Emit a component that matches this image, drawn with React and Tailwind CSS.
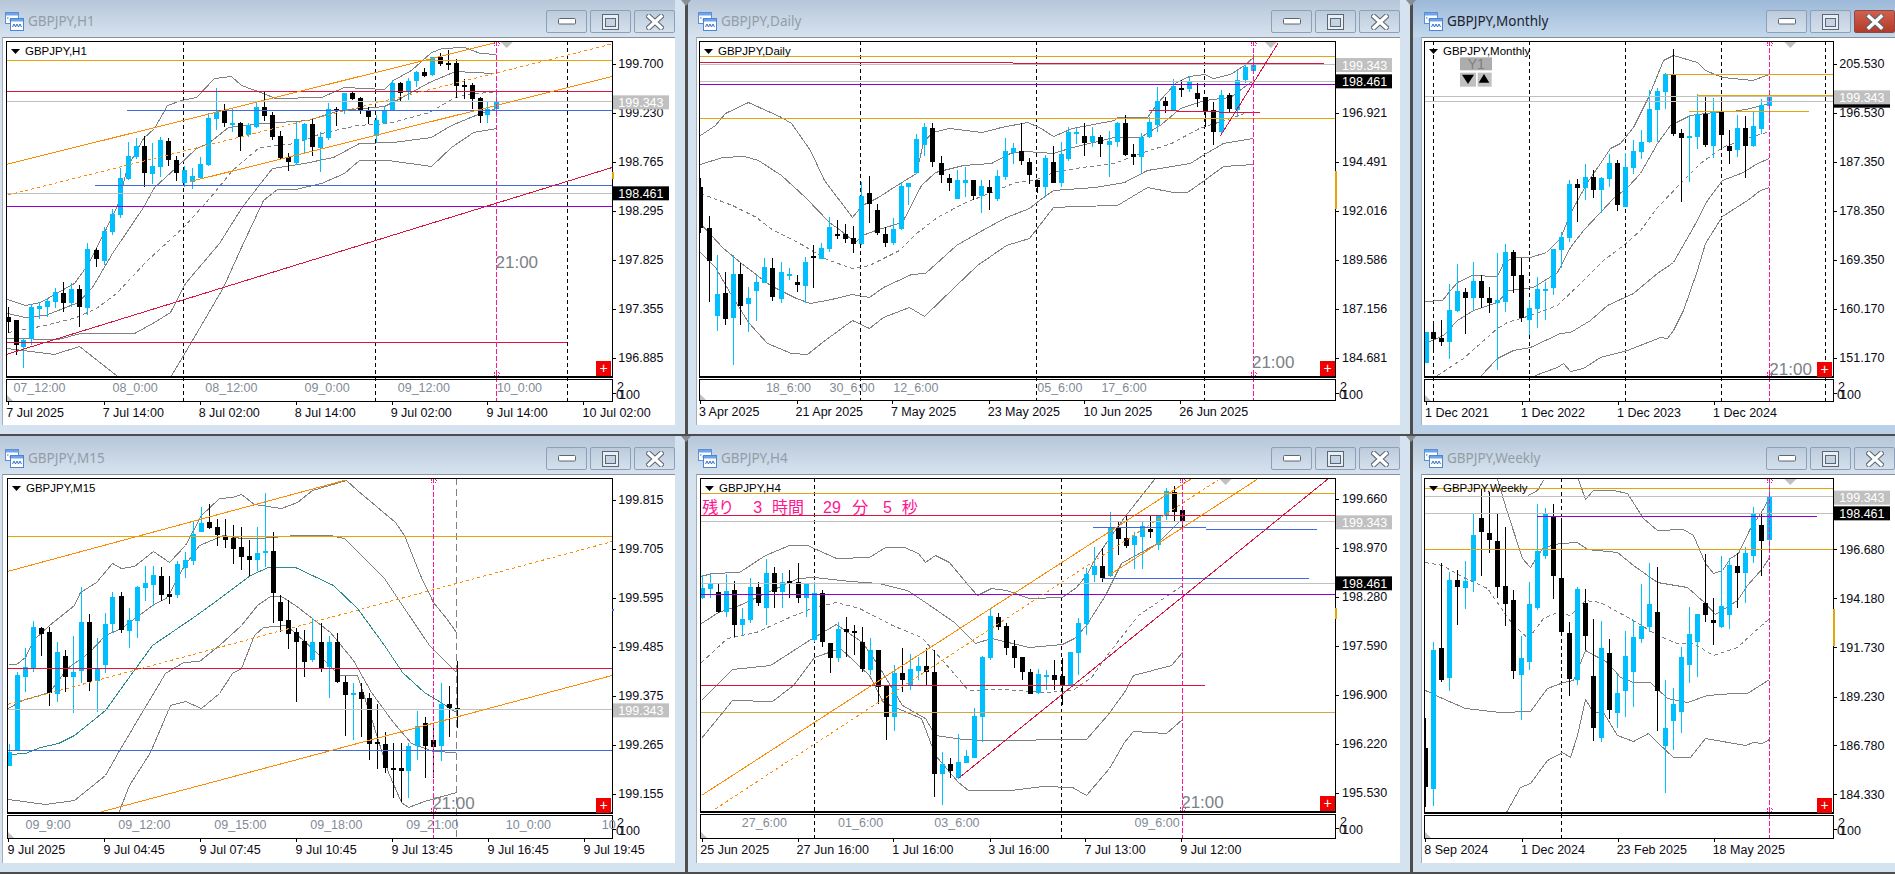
import React from "react";

const BLUE = "#00bfff";
const GOLD = "#e5a50a";
const CRIM = "#dc143c";
const PURP = "#9400d3";
const ROY = "#4169e1";
const LG = "#c0c0c0";
const ORG = "#ff8c00";
const PINK = "#ff1493";

const charts = [
  {
    id: "h1", title: "GBPJPY,H1", sx: 2.24, ox: 0, oy: 0, vb: [3, 38, 672, 387],
    plot: [13, 124, 1370, 1130], sub: [13, 1136, 1370, 1204], priceX: 1385, tri: 1135,
    prices: [["199.700", 191], ["199.230", 338], ["198.765", 485], ["198.295", 632], ["197.825", 779], ["197.355", 926], ["196.885", 1073]],
    boxes: [["199.343", 307, LG], ["198.461", 580, "#000"]],
    subs: [["07_12:00", 30], ["08_0:00", 252], ["08_12:00", 460], ["09_0:00", 682], ["09_12:00", 891], ["10_0:00", 1113]], subY: 1162,
    dates: [["7 Jul 2025", 14, 17], ["7 Jul 14:00", 230, 232], ["8 Jul 02:00", 445, 447], ["8 Jul 14:00", 660, 662], ["9 Jul 02:00", 875, 877], ["9 Jul 14:00", 1090, 1092], ["10 Jul 02:00", 1305, 1307]], dateY: 1238,
    clock: [1110, 785], plus: [1335, 1083], vdash: [411, 841, 1271], pink: 1110, tick: [515, 537, GOLD],
    h: [[15, 1370, 181, GOLD], [15, 1370, 274, CRIM], [15, 1370, 304, LG], [284, 1370, 331, ROY], [213, 1370, 556, ROY], [15, 1370, 580, LG], [15, 1370, 619, PURP], [15, 1270, 1027, CRIM]],
    seg: [[15, 493, 1110, 128, ORG], [18, 585, 1370, 132, ORG, "3 3"], [425, 545, 1370, 230, ORG], [15, 1063, 1370, 503, CRIM]],
    bands: [
      [15, 897, 55, 915, 90, 905, 125, 880, 165, 850, 195, 795, 235, 690, 265, 610, 285, 500, 320, 415, 345, 385, 375, 315, 405, 300, 440, 290, 480, 235, 518, 228, 540, 255, 590, 278, 615, 295, 720, 292, 770, 262, 860, 268, 880, 240, 920, 210, 965, 155, 990, 145, 1040, 142, 1075, 160, 1110, 163],
      [15, 940, 55, 950, 100, 945, 175, 905, 205, 860, 250, 760, 320, 620, 345, 560, 395, 500, 440, 445, 465, 430, 510, 380, 590, 370, 690, 360, 760, 330, 860, 318, 900, 290, 960, 245, 1020, 212, 1060, 215, 1105, 220],
      [15, 1015, 130, 1018, 180, 1000, 300, 1000, 345, 965, 380, 935, 415, 850, 490, 730, 540, 625, 575, 560, 610, 505, 680, 490, 745, 470, 805, 428, 880, 427, 965, 412, 1010, 375, 1075, 340, 1110, 323],
      [15, 1045, 120, 1062, 178, 1037, 260, 1125, 270, 1135], [380, 1130, 430, 1020, 500, 860, 540, 740, 590, 600, 620, 567, 660, 567, 720, 548, 770, 520, 805, 480, 870, 480, 965, 498, 1010, 440, 1060, 395, 1110, 385],
    ],
    mid: [18, 995, 100, 975, 170, 950, 215, 925, 260, 880, 330, 780, 410, 680, 470, 590, 520, 510, 580, 440, 660, 430, 720, 400, 800, 375, 870, 370, 960, 335, 1020, 292, 1060, 280, 1105, 277],
    candles: [[17, 950, 965, 920, 1000, 0], [35, 960, 1035, 960, 1065, 0], [52, 1020, 1040, 1015, 1105, 1], [70, 922, 1018, 912, 1035, 1], [88, 918, 928, 905, 958, 1], [106, 903, 922, 895, 950, 1], [124, 877, 906, 865, 925, 1], [142, 880, 908, 847, 935, 0], [160, 868, 910, 850, 922, 1], [178, 868, 920, 855, 980, 0], [196, 748, 923, 730, 945, 1], [214, 750, 778, 745, 800, 0], [232, 693, 782, 680, 795, 1], [250, 642, 695, 628, 705, 1], [268, 535, 645, 505, 655, 1], [286, 468, 538, 425, 540, 1], [304, 438, 472, 415, 478, 1], [322, 438, 518, 408, 562, 0], [340, 498, 522, 430, 552, 1], [358, 420, 500, 410, 530, 1], [376, 422, 480, 415, 498, 0], [394, 480, 518, 468, 542, 0], [412, 510, 548, 498, 562, 1], [430, 528, 545, 503, 567, 1], [447, 492, 533, 470, 535, 1], [465, 355, 494, 340, 498, 1], [483, 335, 356, 265, 390, 1], [501, 332, 370, 312, 382, 0], [519, 370, 374, 325, 395, 1], [537, 370, 410, 365, 452, 0], [555, 375, 405, 368, 412, 1], [573, 322, 380, 308, 385, 1], [591, 322, 348, 275, 362, 0], [609, 345, 410, 335, 420, 0], [627, 408, 474, 392, 478, 0], [645, 472, 486, 458, 512, 0], [663, 418, 490, 365, 495, 1], [681, 372, 420, 368, 458, 1], [698, 372, 440, 358, 468, 0], [716, 412, 445, 395, 515, 1], [734, 328, 415, 310, 420, 1], [752, 326, 332, 322, 378, 0], [770, 280, 332, 278, 342, 1], [788, 280, 298, 275, 300, 0], [806, 295, 330, 290, 342, 0], [824, 332, 350, 320, 372, 0], [842, 360, 408, 345, 428, 1], [860, 332, 370, 322, 372, 1], [878, 250, 332, 240, 332, 1], [896, 250, 280, 245, 305, 0], [914, 243, 275, 235, 300, 1], [931, 216, 243, 212, 262, 1], [949, 216, 228, 205, 232, 0], [967, 172, 225, 170, 228, 1], [985, 170, 192, 158, 198, 0], [1003, 188, 194, 150, 210, 0], [1021, 190, 258, 178, 295, 0], [1039, 254, 258, 238, 296, 0], [1057, 255, 298, 250, 328, 0], [1075, 294, 347, 290, 370, 0], [1092, 328, 345, 305, 368, 1], [1110, 305, 327, 268, 350, 1]],
  },
  {
    id: "d1", title: "GBPJPY,Daily", sx: 2.119, ox: 680, oy: 0, vb: [697, 38, 703, 387],
    plot: [40, 124, 1389, 1130], sub: [40, 1136, 1389, 1201], priceX: 1403, tri: 1252,
    prices: [["196.921", 338], ["194.491", 485], ["192.016", 632], ["189.586", 779], ["187.156", 926], ["184.681", 1073]],
    boxes: [["199.343", 195, LG], ["198.461", 244, "#000"]],
    subs: [["18_6:00", 182], ["30_6:00", 317], ["12_6:00", 452], ["05_6:00", 757], ["17_6:00", 893]], subY: 1162,
    dates: [["3 Apr 2025", 40, 43], ["21 Apr 2025", 245, 247], ["7 May 2025", 447, 450], ["23 May 2025", 652, 654], ["10 Jun 2025", 855, 857], ["26 Jun 2025", 1058, 1060]], dateY: 1235,
    clock: [1212, 1085], plus: [1356, 1083], vdash: [382, 755, 1111], pink: 1214, tick: [513, 628, GOLD],
    h: [[42, 1389, 169, GOLD], [42, 705, 187, CRIM], [705, 1365, 190, CRIM], [42, 1389, 192, LG], [42, 1389, 244, LG], [42, 1389, 253, PURP], [42, 1389, 355, GOLD], [993, 1053, 331, CRIM]],
    seg: [[1053, 334, 1228, 338, CRIM], [1145, 408, 1268, 128, CRIM]],
    bands: [
      [42, 405, 75, 375, 95, 340, 145, 307, 215, 352, 235, 370, 275, 450, 305, 540, 365, 650, 385, 615, 420, 590, 455, 558, 500, 520, 515, 425, 535, 395, 570, 385, 640, 395, 680, 380, 735, 367, 760, 380, 790, 407, 830, 383, 920, 360, 925, 350, 990, 350, 1010, 310, 1050, 245, 1078, 228, 1110, 222, 1130, 235, 1165, 222, 1195, 195, 1214, 170],
      [42, 492, 90, 472, 135, 468, 165, 480, 215, 525, 265, 590, 315, 665, 340, 690, 370, 725, 385, 705, 420, 688, 470, 665, 510, 555, 540, 515, 600, 495, 660, 490, 700, 460, 730, 452, 790, 458, 830, 440, 920, 412, 975, 410, 1020, 372, 1060, 325, 1110, 300, 1165, 290, 1190, 265, 1214, 240],
      [42, 670, 90, 740, 130, 790, 190, 855, 245, 895, 275, 908, 320, 898, 365, 883, 400, 890, 430, 860, 490, 822, 520, 818, 585, 735, 640, 690, 690, 650, 740, 625, 760, 600, 790, 570, 880, 560, 940, 545, 990, 510, 1080, 490, 1110, 462, 1150, 430, 1214, 413],
      [42, 755, 75, 800, 105, 880, 145, 965, 185, 1030, 235, 1060, 270, 1062, 300, 1025, 365, 960, 400, 985, 430, 950, 485, 922, 518, 948, 580, 860, 630, 795, 690, 735, 740, 715, 790, 622, 840, 618, 925, 615, 990, 562, 1045, 577, 1075, 575, 1110, 540, 1150, 497, 1214, 493],
    ],
    mid: [42, 578, 110, 615, 160, 650, 190, 685, 260, 735, 310, 778, 365, 805, 400, 795, 465, 750, 500, 700, 545, 650, 600, 610, 660, 575, 710, 545, 750, 540, 790, 515, 850, 500, 920, 490, 975, 460, 1040, 430, 1100, 385, 1165, 355, 1195, 340],
    candles: [[43, 562, 685, 535, 700, 0], [61, 683, 782, 648, 905, 0], [78, 882, 948, 765, 992, 1], [95, 880, 956, 815, 975, 0], [112, 823, 953, 765, 1095, 1], [128, 822, 918, 790, 975, 0], [145, 895, 912, 860, 995, 1], [162, 847, 873, 825, 962, 1], [179, 802, 848, 775, 850, 1], [196, 805, 890, 775, 902, 0], [213, 817, 897, 785, 908, 1], [230, 823, 827, 805, 840, 1], [247, 845, 854, 825, 875, 0], [264, 787, 857, 770, 908, 1], [281, 768, 773, 735, 865, 0], [298, 745, 777, 730, 778, 1], [315, 682, 748, 652, 755, 1], [332, 702, 705, 660, 718, 0], [349, 702, 716, 672, 730, 0], [366, 714, 732, 678, 758, 0], [383, 588, 732, 545, 735, 1], [400, 580, 612, 528, 668, 0], [417, 630, 700, 612, 705, 0], [434, 702, 728, 680, 740, 0], [451, 688, 730, 655, 735, 1], [468, 558, 688, 545, 690, 1], [484, 550, 560, 548, 615, 1], [501, 418, 518, 402, 522, 1], [518, 382, 435, 368, 468, 1], [535, 385, 486, 370, 502, 0], [552, 490, 525, 468, 548, 0], [569, 535, 548, 522, 572, 0], [586, 540, 596, 510, 598, 1], [603, 541, 548, 502, 590, 1], [620, 541, 588, 540, 600, 0], [637, 558, 588, 540, 640, 1], [654, 560, 578, 540, 630, 0], [671, 528, 598, 510, 602, 1], [688, 453, 532, 415, 540, 1], [705, 445, 460, 430, 492, 1], [722, 453, 482, 370, 495, 0], [739, 487, 525, 475, 552, 0], [756, 540, 560, 540, 580, 0], [773, 473, 562, 465, 590, 1], [790, 487, 548, 438, 550, 0], [807, 462, 548, 425, 560, 1], [823, 396, 477, 382, 482, 1], [840, 396, 402, 385, 432, 1], [857, 408, 428, 368, 468, 0], [874, 408, 426, 380, 440, 1], [891, 410, 432, 405, 472, 0], [908, 422, 434, 392, 530, 1], [925, 370, 425, 365, 440, 1], [942, 370, 465, 345, 468, 0], [959, 462, 470, 432, 495, 0], [976, 410, 472, 398, 518, 1], [993, 366, 410, 350, 413, 1], [1010, 304, 374, 260, 395, 1], [1027, 304, 318, 292, 338, 0], [1044, 258, 330, 238, 332, 1], [1061, 265, 269, 240, 292, 0], [1078, 245, 268, 228, 275, 1], [1095, 280, 297, 248, 322, 0], [1112, 292, 332, 290, 382, 0], [1129, 330, 396, 305, 435, 0], [1146, 286, 396, 270, 405, 1], [1163, 285, 328, 280, 340, 0], [1180, 240, 330, 212, 350, 1], [1197, 202, 240, 195, 248, 1], [1214, 195, 212, 162, 215, 1]],
  },
  {
    id: "mn", title: "GBPJPY,Monthly", active: true, sx: 3, ox: 1400, oy: 0, vb: [1422, 38, 473, 387],
    plot: [73, 124, 1298, 1130], sub: [73, 1136, 1298, 1204], priceX: 1318, tri: 1171,
    prices: [["205.530", 191], ["196.530", 338], ["187.350", 485], ["178.350", 632], ["169.350", 779], ["160.170", 926], ["151.170", 1073]],
    boxes: [["198.461", 317, "#000", 1], ["199.343", 292, LG]],
    subs: [], subY: 1162,
    dates: [["1 Dec 2021", 75, 77], ["1 Dec 2022", 363, 365], ["1 Dec 2023", 651, 653], ["1 Dec 2024", 939, 941]], dateY: 1238,
    clock: [1108, 1105], plus: [1252, 1085], vdash: [100, 388, 676, 964, 1276], pink: 1108, y1: true,
    h: [[74, 1298, 289, LG], [74, 1298, 304, LG], [797, 1298, 223, GOLD], [892, 1298, 284, GOLD], [867, 1227, 334, GOLD]],
    seg: [],
    bands: [
      [75, 903, 125, 900, 150, 870, 172, 845, 215, 825, 290, 828, 310, 790, 340, 772, 390, 770, 438, 755, 480, 715, 510, 640, 560, 545, 600, 490, 630, 445, 660, 430, 700, 380, 745, 290, 790, 180, 820, 165, 890, 185, 915, 210, 965, 232, 1055, 241, 1108, 222],
      [74, 1030, 130, 1005, 170, 960, 220, 930, 290, 905, 325, 870, 400, 860, 470, 815, 510, 740, 550, 690, 600, 635, 640, 595, 680, 560, 720, 520, 770, 430, 810, 375, 870, 345, 940, 335, 1000, 333, 1050, 325, 1108, 310],
      [240, 1128, 290, 1075, 340, 1050, 390, 1042, 480, 1000, 510, 995, 570, 960, 620, 915, 700, 880, 770, 820, 820, 785, 880, 680, 920, 600, 965, 540, 1030, 515, 1070, 490, 1108, 475],
      [405, 1125, 470, 1100, 490, 1088, 510, 1113, 550, 1105, 600, 1072, 680, 1050, 780, 1010, 800, 1014, 820, 990, 850, 930, 890, 810, 915, 730, 965, 648, 1040, 600, 1080, 570, 1108, 560],
    ],
    mid: [110, 1125, 190, 1075, 290, 985, 320, 965, 390, 945, 470, 915, 540, 850, 610, 780, 670, 735, 720, 690, 770, 620, 840, 550, 900, 490, 965, 440, 1030, 418, 1108, 393],
    candles: [[79, 995, 1088, 995, 1088, 1], [100, 997, 1017, 962, 1050, 0], [124, 1013, 1025, 960, 1038, 0], [148, 930, 1025, 852, 1077, 1], [172, 873, 933, 792, 937, 1], [196, 876, 893, 865, 1002, 0], [220, 843, 893, 786, 930, 1], [244, 843, 893, 825, 925, 0], [268, 894, 908, 860, 938, 0], [292, 900, 910, 758, 1110, 1], [316, 756, 905, 732, 937, 1], [340, 756, 828, 750, 880, 0], [364, 825, 955, 775, 965, 0], [388, 925, 960, 900, 1005, 1], [412, 867, 927, 830, 985, 1], [436, 867, 870, 845, 960, 1], [460, 747, 864, 747, 885, 1], [484, 711, 750, 697, 805, 1], [508, 552, 714, 540, 725, 1], [532, 552, 564, 537, 665, 0], [556, 531, 564, 492, 600, 1], [580, 531, 570, 510, 593, 0], [604, 534, 570, 530, 638, 1], [628, 489, 537, 462, 560, 1], [652, 489, 614, 480, 632, 0], [676, 501, 621, 460, 622, 1], [700, 453, 504, 420, 522, 1], [724, 426, 456, 390, 478, 1], [748, 327, 426, 270, 430, 1], [772, 273, 330, 265, 425, 1], [796, 222, 276, 220, 327, 1], [820, 225, 402, 147, 408, 0], [844, 400, 414, 388, 605, 0], [868, 408, 413, 345, 545, 1], [892, 343, 411, 282, 447, 1], [916, 343, 435, 287, 440, 0], [940, 336, 438, 295, 473, 1], [964, 336, 405, 305, 440, 0], [988, 437, 453, 390, 492, 0], [1012, 384, 450, 345, 472, 1], [1036, 384, 438, 348, 533, 0], [1060, 378, 438, 335, 440, 1], [1084, 316, 387, 297, 402, 1], [1108, 291, 318, 288, 360, 1]],
  },
  {
    id: "m15", title: "GBPJPY,M15", sx: 2.24, ox: 0, oy: 435, vb: [3, 475, 672, 388],
    plot: [16, 130, 1370, 1135], sub: [16, 1141, 1370, 1210], priceX: 1385,
    prices: [["199.815", 194], ["199.705", 341], ["199.595", 488], ["199.485", 635], ["199.375", 782], ["199.265", 929], ["199.155", 1076]],
    boxes: [["199.343", 826, LG]],
    subs: [["09_9:00", 57], ["09_12:00", 265], ["09_15:00", 480], ["09_18:00", 695], ["09_21:00", 910], ["10_0:00", 1133], ["10", 1348]], subY: 1168,
    dates: [["9 Jul 2025", 17, 19], ["9 Jul 04:45", 232, 234], ["9 Jul 07:45", 447, 449], ["9 Jul 10:45", 662, 664], ["9 Jul 13:45", 877, 879], ["9 Jul 16:45", 1092, 1094], ["9 Jul 19:45", 1307, 1309]], dateY: 1244,
    clock: [968, 1102], plus: [1335, 1090], vdash: [], pink: 969, gray: 1022, tick: [523, 527, ROY],
    h: [[18, 1370, 304, GOLD], [18, 1370, 700, CRIM], [18, 1370, 823, LG], [18, 1370, 946, ROY]],
    seg: [[18, 409, 775, 135, ORG], [18, 808, 1370, 320, ORG, "3 3"], [220, 1133, 1370, 722, ORG]],
    bands: [
      [18, 688, 36, 686, 55, 665, 73, 615, 110, 570, 165, 510, 180, 470, 215, 440, 250, 383, 270, 400, 300, 392, 342, 348, 378, 380, 415, 330, 450, 240, 490, 190, 520, 185, 540, 178, 570, 208, 630, 220, 665, 200, 700, 165, 775, 135, 800, 165, 885, 260, 905, 300, 940, 420, 970, 500, 1000, 550, 1022, 592],
      [18, 820, 50, 795, 110, 770, 150, 700, 200, 650, 235, 600, 270, 580, 340, 510, 375, 485, 410, 395, 445, 330, 500, 300, 540, 310, 580, 310, 610, 305, 660, 300, 740, 300, 770, 308, 815, 370, 860, 430, 900, 510, 960, 630, 1000, 680, 1022, 712],
      [18, 1093, 100, 1108, 165, 1095, 235, 1020, 265, 950, 300, 870, 370, 715, 410, 680, 445, 678, 490, 630, 540, 570, 575, 510, 605, 482, 630, 482, 660, 510, 740, 590, 790, 675, 830, 770, 880, 860, 920, 925, 970, 948, 1022, 952],
      [265, 1133, 290, 1050, 335, 950, 380, 810, 415, 798, 450, 820, 490, 775, 520, 715, 540, 700, 570, 600, 590, 575, 640, 570, 700, 640, 760, 720, 800, 720, 830, 850, 870, 1010, 898, 1100, 915, 1117, 950, 1097, 1022, 1072],
    ],
    teal: [18, 958, 55, 955, 90, 935, 130, 925, 165, 900, 235, 825, 280, 740, 340, 630, 440, 540, 480, 500, 560, 420, 600, 395, 660, 397, 745, 450, 800, 520, 860, 630, 900, 710, 950, 770, 990, 805, 1022, 832],
    candles: [[21, 950, 992, 928, 992, 1], [37, 720, 945, 712, 945, 1], [55, 696, 726, 640, 772, 1], [73, 576, 698, 558, 712, 1], [91, 580, 596, 575, 662, 0], [109, 591, 774, 575, 812, 0], [127, 652, 776, 622, 800, 1], [145, 663, 727, 645, 770, 0], [163, 710, 725, 603, 835, 1], [181, 562, 708, 455, 745, 1], [199, 562, 742, 538, 767, 0], [217, 703, 738, 610, 832, 1], [235, 568, 690, 535, 715, 1], [252, 486, 568, 470, 595, 1], [270, 484, 586, 472, 594, 0], [288, 556, 588, 518, 640, 1], [306, 456, 558, 452, 608, 1], [324, 444, 458, 393, 497, 1], [342, 420, 450, 392, 512, 1], [360, 424, 480, 396, 497, 0], [378, 478, 486, 423, 506, 0], [396, 388, 480, 378, 490, 1], [414, 376, 398, 350, 430, 1], [432, 296, 378, 262, 390, 1], [450, 264, 290, 215, 292, 1], [468, 262, 278, 208, 282, 0], [485, 276, 300, 252, 333, 0], [503, 302, 314, 252, 340, 0], [521, 310, 342, 270, 387, 0], [539, 337, 366, 275, 405, 0], [557, 364, 374, 316, 422, 0], [575, 354, 374, 276, 408, 1], [593, 348, 353, 175, 395, 1], [611, 348, 474, 292, 563, 0], [628, 502, 558, 480, 590, 0], [646, 555, 596, 495, 642, 0], [664, 592, 620, 580, 800, 0], [682, 618, 680, 585, 726, 0], [700, 622, 675, 548, 680, 1], [718, 621, 698, 565, 710, 0], [736, 621, 695, 602, 790, 1], [754, 621, 740, 595, 745, 0], [772, 742, 780, 722, 902, 0], [790, 774, 778, 745, 915, 1], [808, 772, 792, 745, 905, 0], [826, 790, 928, 775, 975, 0], [844, 922, 927, 808, 1003, 0], [862, 928, 998, 890, 1015, 0], [880, 1000, 1004, 925, 1090, 0], [898, 1000, 1007, 925, 1100, 0], [915, 934, 1008, 925, 1090, 1], [933, 872, 934, 828, 975, 1], [951, 865, 933, 847, 1030, 0], [969, 915, 936, 870, 1030, 0], [987, 808, 933, 745, 977, 1], [1005, 806, 820, 752, 905, 0], [1023, 820, 823, 678, 880, 0]],
  },
  {
    id: "h4", title: "GBPJPY,H4", sx: 2.119, ox: 680, oy: 435, vb: [697, 475, 703, 388],
    plot: [42, 130, 1389, 1130], sub: [42, 1136, 1389, 1210], priceX: 1403, tri: 1156, timer: true,
    prices: [["199.660", 191], ["198.970", 338], ["198.280", 485], ["197.590", 632], ["196.900", 779], ["196.220", 926], ["195.530", 1073]],
    boxes: [["199.343", 262, LG], ["198.461", 445, "#000"]],
    subs: [["27_6:00", 131], ["01_6:00", 335], ["03_6:00", 539], ["09_6:00", 963]], subY: 1162,
    dates: [["25 Jun 2025", 43, 46], ["27 Jun 16:00", 247, 249], ["1 Jul 16:00", 450, 452], ["3 Jul 16:00", 653, 656], ["7 Jul 13:00", 857, 859], ["9 Jul 12:00", 1060, 1062]], dateY: 1244,
    clock: [1062, 1099], plus: [1356, 1083], vdash: [283, 808], pink: 1063, tick: [520, 552, GOLD],
    h: [[44, 1389, 175, GOLD], [44, 1389, 239, CRIM], [44, 1389, 259, LG], [875, 1115, 277, ROY], [1115, 1350, 281, ROY], [895, 1333, 430, ROY], [44, 1389, 445, LG], [44, 1389, 476, PURP], [44, 1112, 751, CRIM], [44, 1389, 832, "#d4a64a"]],
    seg: [[47, 1080, 1085, 130, ORG], [75, 1122, 1140, 135, ORG, "3 3"], [910, 420, 1223, 133, ORG], [590, 1030, 1372, 133, CRIM]],
    bands: [
      [44, 422, 65, 415, 125, 410, 180, 360, 230, 330, 270, 330, 330, 370, 400, 365, 435, 335, 475, 335, 505, 355, 520, 380, 540, 360, 570, 380, 610, 450, 630, 480, 660, 460, 690, 465, 740, 490, 810, 485, 840, 455, 860, 420, 880, 370, 940, 245, 1005, 132],
      [44, 565, 80, 530, 125, 510, 185, 470, 250, 430, 285, 425, 360, 437, 420, 445, 480, 465, 520, 500, 580, 560, 625, 625, 660, 610, 740, 635, 810, 628, 835, 610, 860, 570, 900, 480, 935, 385, 1010, 325, 1063, 250],
      [44, 795, 110, 702, 190, 690, 280, 610, 330, 566, 385, 620, 420, 690, 470, 810, 520, 850, 540, 900, 600, 912, 650, 915, 860, 912, 905, 840, 940, 770, 960, 720, 1040, 690, 1063, 650],
      [44, 910, 110, 795, 195, 798, 240, 750, 285, 665, 340, 640, 400, 720, 430, 800, 510, 850, 540, 960, 590, 1040, 610, 1065, 700, 1065, 770, 1052, 830, 1055, 860, 1080, 910, 1000, 940, 920, 960, 888, 1030, 895, 1063, 852],
    ],
    mid: [44, 680, 100, 610, 160, 590, 230, 545, 285, 515, 330, 502, 380, 520, 450, 570, 510, 605, 560, 680, 610, 765, 680, 762, 780, 770, 830, 765, 870, 725, 910, 650, 970, 540, 1063, 450],
    candles: [[46, 460, 490, 420, 492, 1], [63, 446, 462, 418, 490, 1], [80, 470, 530, 445, 535, 0], [97, 468, 530, 418, 545, 1], [114, 465, 570, 438, 607, 0], [131, 552, 570, 520, 600, 1], [148, 456, 555, 430, 565, 1], [165, 456, 504, 440, 512, 0], [182, 414, 519, 372, 570, 1], [199, 414, 472, 395, 518, 0], [216, 442, 472, 415, 520, 1], [232, 438, 444, 405, 490, 0], [249, 440, 490, 385, 505, 0], [266, 447, 488, 446, 545, 1], [283, 475, 615, 440, 620, 1], [300, 475, 622, 465, 635, 0], [317, 625, 668, 625, 713, 0], [334, 582, 668, 560, 680, 1], [351, 582, 590, 545, 665, 0], [368, 588, 594, 570, 660, 0], [385, 622, 702, 575, 710, 0], [402, 645, 705, 610, 720, 1], [419, 646, 755, 646, 807, 0], [436, 752, 845, 750, 915, 0], [453, 714, 846, 690, 888, 1], [470, 714, 735, 640, 770, 0], [487, 702, 750, 658, 765, 1], [504, 693, 707, 665, 735, 1], [521, 693, 710, 640, 750, 0], [538, 712, 1018, 645, 1085, 0], [555, 988, 1018, 950, 1110, 1], [572, 988, 1007, 968, 1028, 0], [589, 982, 1030, 897, 1032, 1], [606, 963, 984, 945, 985, 1], [622, 843, 968, 820, 970, 1], [639, 665, 846, 662, 922, 1], [656, 543, 668, 522, 675, 1], [673, 546, 575, 533, 585, 0], [690, 573, 638, 565, 660, 0], [707, 633, 668, 615, 700, 0], [724, 667, 710, 665, 735, 0], [741, 712, 777, 702, 778, 0], [758, 717, 775, 703, 778, 1], [775, 720, 725, 705, 765, 1], [792, 720, 735, 675, 765, 0], [809, 723, 752, 670, 810, 0], [826, 652, 752, 650, 752, 1], [843, 565, 654, 550, 720, 1], [860, 418, 568, 400, 600, 1], [877, 393, 420, 335, 442, 1], [894, 393, 428, 338, 440, 0], [911, 277, 422, 232, 425, 1], [928, 278, 312, 262, 360, 0], [945, 310, 332, 240, 340, 0], [962, 304, 330, 290, 402, 1], [979, 273, 305, 260, 402, 1], [996, 282, 290, 240, 310, 0], [1013, 240, 330, 240, 345, 1], [1030, 168, 240, 160, 255, 1], [1046, 172, 230, 153, 258, 0], [1063, 226, 258, 218, 280, 0]],
  },
  {
    id: "w1", title: "GBPJPY,Weekly", sx: 3, ox: 1400, oy: 435, vb: [1422, 475, 473, 388],
    plot: [73, 130, 1298, 1135], sub: [73, 1141, 1298, 1210], priceX: 1318, tri: 1171,
    prices: [["196.680", 343], ["194.180", 490], ["191.730", 637], ["189.230", 785], ["186.780", 931], ["184.330", 1078]],
    boxes: [["199.343", 188, LG], ["198.461", 235, "#000"]],
    subs: [], subY: 1168,
    dates: [["8 Sep 2024", 73, 76], ["1 Dec 2024", 363, 365], ["23 Feb 2025", 650, 653], ["18 May 2025", 938, 941]], dateY: 1244,
    plus: [1252, 1090], vdash: [484], pink: 1108, tick: [522, 632, GOLD],
    h: [[74, 1298, 160, GOLD], [74, 1298, 184, LG], [74, 1298, 235, LG], [412, 1250, 244, PURP], [74, 1305, 343, GOLD]],
    seg: [],
    bands: [
      [290, 132, 320, 230, 365, 370, 390, 397, 430, 335, 480, 325, 530, 322, 560, 342, 650, 350, 700, 390, 770, 440, 860, 455, 915, 505, 945, 537, 1010, 495, 1040, 450, 1085, 400, 1108, 365],
      [385, 180, 410, 165, 430, 135],
      [535, 132, 556, 192, 580, 165, 640, 165, 680, 175, 730, 250, 770, 285, 850, 283, 880, 300, 915, 385, 940, 415, 965, 405, 990, 370, 1015, 355, 1050, 280, 1085, 225, 1108, 185],
      [75, 765, 125, 790, 195, 818, 300, 832, 390, 828, 440, 760, 490, 742, 520, 735, 556, 645, 620, 680, 660, 725, 700, 740, 750, 740, 800, 790, 860, 800, 920, 780, 1000, 775, 1040, 775, 1108, 733],
      [318, 1132, 360, 1055, 390, 1045, 440, 975, 485, 950, 510, 965, 530, 900, 555, 793, 580, 830, 610, 830, 650, 900, 700, 917, 745, 895, 775, 925, 820, 967, 870, 965, 915, 908, 1035, 930, 1060, 920, 1085, 925, 1108, 912],
    ],
    mid: [75, 380, 125, 390, 190, 425, 260, 460, 340, 570, 385, 610, 430, 550, 470, 532, 510, 540, 555, 495, 600, 500, 700, 555, 770, 600, 830, 625, 880, 625, 940, 660, 1010, 635, 1050, 600, 1108, 548],
    candles: [[76, 940, 1055, 848, 1115, 0], [100, 646, 1062, 622, 1112, 1], [124, 640, 735, 385, 740, 0], [148, 435, 728, 412, 768, 1], [172, 435, 456, 405, 570, 0], [196, 438, 460, 378, 522, 1], [220, 300, 438, 237, 470, 1], [244, 249, 290, 160, 422, 0], [268, 294, 315, 170, 353, 0], [292, 318, 456, 233, 488, 0], [316, 453, 507, 276, 572, 0], [340, 495, 708, 465, 732, 0], [364, 670, 720, 602, 855, 1], [388, 507, 681, 440, 705, 1], [412, 348, 520, 207, 525, 1], [436, 237, 362, 218, 372, 1], [460, 245, 422, 207, 492, 0], [484, 430, 590, 250, 590, 0], [508, 594, 732, 560, 782, 0], [532, 462, 736, 456, 750, 1], [556, 504, 603, 462, 645, 0], [580, 723, 878, 552, 918, 0], [604, 639, 908, 558, 920, 1], [628, 654, 825, 612, 852, 0], [652, 774, 834, 718, 880, 1], [676, 663, 768, 588, 845, 1], [700, 606, 712, 555, 815, 1], [724, 573, 612, 447, 625, 1], [748, 507, 576, 385, 590, 1], [772, 531, 768, 395, 888, 0], [796, 879, 933, 735, 1075, 1], [820, 807, 858, 758, 945, 1], [844, 666, 831, 636, 895, 1], [868, 597, 690, 516, 745, 1], [892, 537, 621, 537, 725, 1], [916, 504, 540, 357, 560, 0], [940, 555, 564, 490, 630, 0], [964, 513, 576, 363, 578, 1], [988, 390, 540, 370, 582, 1], [1012, 393, 414, 355, 518, 0], [1036, 354, 414, 335, 505, 1], [1060, 237, 362, 215, 385, 1], [1084, 270, 318, 237, 422, 0], [1108, 186, 315, 135, 340, 1]],
  },
];

function Chart({ c }) {
  const X = (z) => c.ox + z / c.sx;
  const Y = (z) => c.oy + z / 3;
  const RX = (z) => Math.round(X(z));
  const RY = (z) => Math.round(Y(z));
  const pts = (a) => {
    let s = "";
    for (let i = 0; i < a.length; i += 2) s += `${RX(a[i]) + 0.5},${RY(a[i + 1]) + 0.5} `;
    return s;
  };
  const L = RX(c.plot[0]), T = RY(c.plot[1]), R = RX(c.plot[2]), B = RY(c.plot[3]);
  const ST = RY(c.sub[1]), SB = RY(c.sub[3]);
  const [vx, vy, vw, vh] = c.vb;
  return (
    <svg
      width={vw}
      height={vh}
      viewBox={`${vx} ${vy} ${vw} ${vh}`}
      className="block font-['Liberation_Sans',Arial,sans-serif] text-[12.5px]"
    >
      <defs>
        <clipPath id={`clip-${c.id}`}>
          <rect x={L} y={T} width={R - L} height={B - T} />
        </clipPath>
      </defs>

      <g shapeRendering="crispEdges">
        {c.vdash.map((x) => (
          <line key={x} x1={RX(x) + 0.5} x2={RX(x) + 0.5} y1={T} y2={SB} stroke="#000" strokeDasharray="4 3" />
        ))}
        {c.gray && (
          <line x1={RX(c.gray) + 0.5} x2={RX(c.gray) + 0.5} y1={T} y2={SB} stroke="#808080" strokeDasharray="7 4" />
        )}
      </g>

      <g clipPath={`url(#clip-${c.id})`} shapeRendering="crispEdges">
        {c.bands.map((b, i) => (
          <polyline key={i} points={pts(b)} fill="none" stroke="#808080" />
        ))}
        {c.mid && <polyline points={pts(c.mid)} fill="none" stroke="#808080" strokeDasharray="4 3" />}
        {c.teal && <polyline points={pts(c.teal)} fill="none" stroke="#2e8b8b" />}
        {c.candles.map(([x, t, b, hi, lo, up], i) => {
          const cx = RX(x);
          const col = up ? BLUE : "#000";
          const y1 = RY(Math.min(t, b));
          const y2 = Math.max(RY(Math.max(t, b)), y1 + 2);
          return (
            <g key={i} fill={col}>
              <rect x={cx} y={RY(hi)} width={1} height={Math.max(RY(lo) - RY(hi), 1)} />
              <rect x={cx - 2} y={y1} width={5} height={y2 - y1} />
            </g>
          );
        })}
        {c.h.map(([x1, x2, y, col], i) => (
          <rect key={i} x={RX(x1)} y={RY(y)} width={RX(x2) - RX(x1)} height={1} fill={col} />
        ))}
        {c.seg.map(([x1, y1, x2, y2, col, dash], i) => (
          <line key={i} x1={X(x1)} y1={Y(y1)} x2={X(x2)} y2={Y(y2)} stroke={col} strokeDasharray={dash} />
        ))}
      </g>

      <g shapeRendering="crispEdges" fill="none">
        <line x1={RX(c.pink) + 0.5} x2={RX(c.pink) + 0.5} y1={T} y2={SB} stroke={PINK} strokeDasharray="5 2" />
        <rect x={RX(c.pink) - 2} y={T + 1} width={5} height={3} stroke={PINK} strokeDasharray="1 1" />
        <rect x={RX(c.pink) - 2} y={B - 5} width={5} height={3} stroke={PINK} strokeDasharray="1 1" />
      </g>

      {c.tri && (
        <polygon
          points={`${X(c.tri) - 6},${T + 1} ${X(c.tri) + 6},${T + 1} ${X(c.tri)},${T + 7}`}
          fill={LG}
        />
      )}

      {c.clock && (
        <text x={X(c.clock[0])} y={Y(c.clock[1]) + 6.5} fill="#7c8288" className="text-[17px]">
          21:00
        </text>
      )}

      {c.timer && (
        <text y={Y(215) + 6} fill={PINK} className="font-['Liberation_Sans','Noto_Sans_CJK_JP',sans-serif] text-[16px]">
          <tspan x={X(47)}>残り</tspan>
          <tspan x={X(155)}>3</tspan>
          <tspan x={X(195)}>時間</tspan>
          <tspan x={X(303)}>29</tspan>
          <tspan x={X(365)}>分</tspan>
          <tspan x={X(430)}>5</tspan>
          <tspan x={X(470)}>秒</tspan>
        </text>
      )}

      <g shapeRendering="crispEdges">
        <rect x={L + 0.5} y={T + 0.5} width={R - L} height={B - T} fill="none" stroke="#000" />
        <rect x={L} y={B - 1} width={R - L + 1} height={1} fill="#000" />
        <rect x={L + 0.5} y={ST + 0.5} width={R - L} height={SB - ST} fill="none" stroke="#000" />
      </g>
      <polygon points={`${L + 1},${SB - 6} ${L + 7},${SB} ${L + 1},${SB}`} fill={LG} />

      {c.tick && <rect x={R} y={RY(c.tick[0])} width={2} height={RY(c.tick[1]) - RY(c.tick[0])} fill={c.tick[2]} />}

      <polygon points={`${L + 5},${T + 8} ${L + 14},${T + 8} ${L + 9.5},${T + 13}`} fill="#000" />
      <text x={L + 19} y={T + 14} fill="#000" className="text-[11.5px]">
        {c.title}
      </text>

      {c.y1 && (
        <g>
          <rect x={X(180)} y={Y(172)} width={32} height={13} fill="#adadad" />
          <text x={X(203)} y={Y(172) + 12} fill="#808080" className="text-[14px]">Y1</text>
          <rect x={X(180)} y={Y(218)} width={16} height={14} fill="#c0c0c0" />
          <rect x={X(233)} y={Y(218)} width={14} height={14} fill="#c0c0c0" />
          <polygon points={`${X(186)},${Y(224)} ${X(222)},${Y(224)} ${X(204)},${Y(252)}`} fill="#000" />
          <polygon points={`${X(236)},${Y(248)} ${X(268)},${Y(248)} ${X(252)},${Y(222)}`} fill="#000" />
        </g>
      )}

      {c.prices.map(([t, y]) => (
        <g key={t}>
          <rect x={R + 1} y={RY(y)} width={3} height={1} fill="#000" />
          <text x={X(c.priceX)} y={Y(y) + 4.5} fill="#0a0a14">{t}</text>
        </g>
      ))}

      {c.boxes.map(([t, y, bg, sliver]) => (
        <g key={t}>
          <rect
            x={R + 1}
            y={sliver ? Y(y) - 2 : Y(y) - 7}
            width={56}
            height={sliver ? 4 : 14}
            fill={bg}
          />
          {!sliver && (
            <text x={X(c.priceX)} y={Y(y) + 4.5} fill="#fff">{t}</text>
          )}
        </g>
      ))}

      {c.subs.map(([t, x]) => (
        <text key={x} x={X(x)} y={Y(c.subY) + 4.5} fill="#7f8a96">{t}</text>
      ))}

      <text x={R + 5} y={ST + 12} fill="#0a0a14">2</text>
      <text x={R + 4} y={ST + 19.5} fill="#0a0a14">0</text>
      <text x={R + 7} y={ST + 19.5} fill="#0a0a14">100</text>
      <rect x={R + 1} y={ST + 14} width={3} height={1} fill="#000" />

      {c.dates.map(([t, x, tick]) => (
        <g key={t}>
          <rect x={RX(tick)} y={SB + 1} width={1} height={3} fill="#000" />
          <text x={X(x)} y={Y(c.dateY) + 4.5} fill="#0a0a14">{t}</text>
        </g>
      ))}

      <rect x={RX(c.plus[0])} y={RY(c.plus[1])} width={15} height={15} fill="#f00000" />
      <text x={RX(c.plus[0]) + 7.5} y={RY(c.plus[1]) + 12} textAnchor="middle" fill="#fff" className="text-[14px]">+</text>
    </svg>
  );
}

function WinIcon() {
  return (
    <svg width="19" height="19" viewBox="0 0 19 19" className="shrink-0">
      <rect x="0.5" y="0.5" width="13" height="11" fill="#fff" stroke="#5b8fd8" />
      <rect x="1" y="1" width="12" height="2.5" fill="#6fa3e8" />
      <rect x="5.5" y="6.5" width="13" height="12" fill="#fff" stroke="#4a86d8" />
      <rect x="6" y="7" width="12" height="2.5" fill="#6fa3e8" />
      <path d="M7.5 15l1.5-3 1.5 3 1.5-3 1.5 3 1.5-3 1.5 3" fill="none" stroke="#3a6fc0" />
      <path d="M2 6h1.5M4.5 8h1.5" stroke="#3a6fc0" />
    </svg>
  );
}

const btnClass =
  "flex h-[23px] w-[41px] items-center justify-center rounded-[2px] border border-[#8ea0b5] bg-gradient-to-b from-[#bccbdc] to-[#d5e0ec]";
const btnRed =
  "flex h-[23px] w-[41px] items-center justify-center rounded-[2px] border border-[#8f4a3f] bg-gradient-to-b from-[#d2604e] to-[#b23a2a]";

function TitleButtons({ active }) {
  return (
    <div className="flex shrink-0 gap-[3px]">
      <div className={btnClass}>
        <svg width="18" height="7" viewBox="0 0 18 7">
          <rect x="0.5" y="0.5" width="17" height="5.5" rx="1" fill="#fff" stroke="#5b6773" />
        </svg>
      </div>
      <div className={btnClass}>
        <svg width="17" height="16" viewBox="0 0 17 16">
          <rect x="0.5" y="0.5" width="16" height="15" fill="#e8eef5" stroke="#5b6773" />
          <rect x="3.5" y="4.5" width="10" height="8" fill="#c4d2e2" stroke="#5b6773" />
        </svg>
      </div>
      <div className={active ? btnRed : btnClass}>
        <svg width="18" height="16" viewBox="0 0 18 16">
          <path d="M3 2.5l12 11M15 2.5l-12 11" stroke="#5b6773" strokeWidth="5.5" strokeLinecap="square" />
          <path d="M3 2.5l12 11M15 2.5l-12 11" stroke="#fff" strokeWidth="3.4" strokeLinecap="square" />
        </svg>
      </div>
    </div>
  );
}

function Win({ c, className, titleClass, clientClass }) {
  return (
    <section className={`flex min-w-0 flex-col overflow-hidden border-b-2 border-[#4d4d4d] pb-[9px] ${className}`}>
      <header
        className={`flex shrink-0 items-end pb-[4px] ${titleClass} ${
          c.active ? "bg-gradient-to-b from-[#9db9d8] to-[#c4d8ec]" : "bg-gradient-to-b from-[#b7c7d9] to-[#d6e2ee]"
        }`}
      >
        <div className="flex h-[23px] min-w-0 flex-1 items-center gap-[4px]">
          <WinIcon />
          <span
            className={`font-['Noto_Sans',sans-serif] text-[13.5px] ${
              c.active ? "text-[#1a2430]" : "text-[#939da8]"
            }`}
          >
            {c.title}
          </span>
        </div>
        <TitleButtons active={c.active} />
      </header>
      <div className={`min-h-0 flex-1 border-t border-l border-t-[#87919c] border-l-[#a5aeb8] bg-white ${clientClass}`}>
        <Chart c={c} />
      </div>
    </section>
  );
}

function Notch({ className }) {
  return (
    <svg width="10" height="6" viewBox="0 0 10 6" className={`absolute ${className}`}>
      <path d="M0 0h10L5 6z" fill="#8a8f96" />
    </svg>
  );
}

export default function App() {
  const L = "border-r-[3px] border-r-[#4d4d4d]";
  return (
    <div className="relative grid h-[874px] w-[1895px] grid-cols-[688px_725px_482px] grid-rows-[436px_438px] overflow-hidden bg-[#d3e1ee]">
      {charts.map((c, i) => {
        const col = i % 3;
        const row = i < 3 ? 0 : 1;
        const win = c.active ? "bg-[#b9d0e8]" : "bg-[#d5e3f0]";
        const titleH = row === 0 ? "h-[37px]" : "h-[38px]";
        return (
          <Win
            key={c.id}
            c={c}
            className={`${win} ${col < 2 ? L : ""}`}
            titleClass={`${titleH} ${col === 0 ? "mr-[10px] pl-[5px]" : col === 1 ? "mr-[10px] pl-[10px]" : "pl-[11px]"}`}
            clientClass={col === 0 ? "ml-[2px] mr-[10px]" : col === 1 ? "ml-[8px] mr-[10px]" : "ml-[8px]"}
          />
        );
      })}
      <Notch className="left-[681px] top-0" />
      <Notch className="left-[1406px] top-0" />
      <Notch className="left-[681px] top-[436px]" />
      <Notch className="left-[1406px] top-[436px]" />
    </div>
  );
}
